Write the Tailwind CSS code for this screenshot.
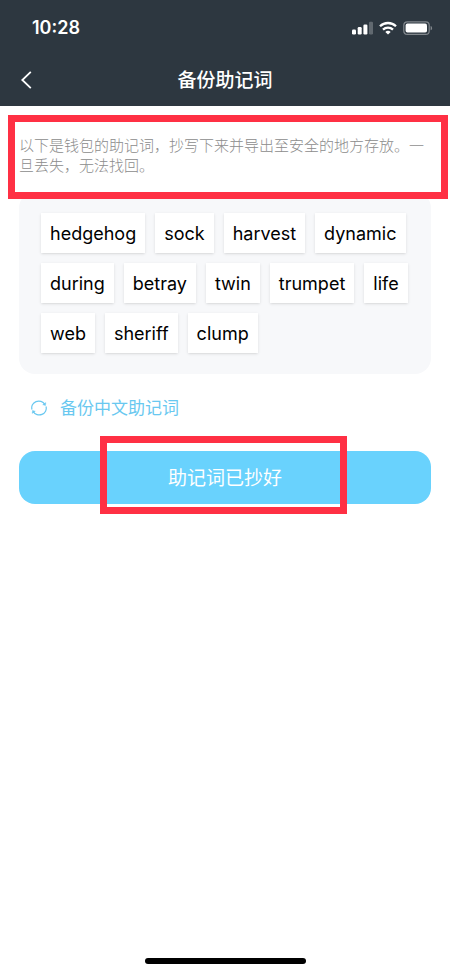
<!DOCTYPE html>
<html lang="zh-CN">
<head>
<meta charset="utf-8">
<meta name="viewport" content="width=device-width, initial-scale=1">
<title>备份助记词</title>
<script src="https://cdn.jsdelivr.net/npm/@tailwindcss/browser@4"></script>
</head>
<body class="flex min-h-screen flex-col bg-white font-[Inter,'Noto_Sans_CJK_SC',sans-serif] text-black">
  <header class="bg-[#2d3740] text-white">
    <div class="flex h-[54px] items-center justify-between pl-8 pr-[17px] pt-[2px]">
      <span class="text-[18px] font-semibold leading-6">10:28</span>
      <div class="flex items-center gap-[6px]">
        <svg class="h-[14px] w-[21px]" viewBox="0 0 21 14" fill="currentColor" role="img" aria-label="信号">
          <rect x="0" y="8.5" width="4" height="5" rx="1.2"/>
          <rect x="5.7" y="6" width="4" height="7.5" rx="1.2"/>
          <rect x="11.4" y="3.5" width="4" height="10" rx="1.2"/>
          <rect x="17" y="0.8" width="4" height="12.7" rx="1.2" opacity=".25"/>
        </svg>
        <svg class="h-[14px] w-[18px]" viewBox="0 0 18 14" fill="none" stroke="currentColor" stroke-width="2.3" role="img" aria-label="无线网络">
          <path d="M1 5.2C5.4.9 12.6.9 17 5.2"/>
          <path d="M4 8.6c2.8-2.6 7.2-2.600 10 0"/>
          <path d="M9 13.600 6.300 10.900c1.500-1.400 3.900-1.400 5.400 0z" fill="currentColor" stroke="none"/>
        </svg>
        <svg class="h-[14px] w-[30px]" viewBox="0 0 30 14" role="img" aria-label="电量">
          <rect x=".8" y=".8" width="25.400" height="12.600" rx="3.500" fill="none" stroke="#fff" stroke-opacity=".4" stroke-width="1.200"/>
          <rect x="2.600" y="2.600" width="21.400" height="9" rx="1.800" fill="#fff"/>
          <path d="M27.600 4.900c2 .6 2 3.800 0 4.400z" fill="#fff" fill-opacity=".4"/>
        </svg>
      </div>
    </div>
    <div class="grid h-[52px] grid-cols-[64px_1fr_64px] items-center">
      <button type="button" aria-label="返回" class="flex h-full items-center pl-5">
        <svg class="h-5 w-3" viewBox="0 0 12 20" fill="none" stroke="currentColor" stroke-width="1.800"><path d="M10.800 1.800 2.300 10l8.500 8.200"/></svg>
      </button>
      <h1 class="pt-[2px] text-center text-[19px] font-medium leading-6">备份助记词</h1>
    </div>
  </header>

  <main class="flex grow flex-col px-[19px]">
    <section class="relative flex h-[86px] flex-col pt-[30px]">
      <p class="text-[15px] font-light leading-5 text-[#8c8c8c]">以下是钱包的助记词，抄写下来并导出至安全的地方存放。一旦丢失，无法找回。</p>
      <div class="pointer-events-none absolute -left-[11px] -right-[17px] top-[9px] z-10 h-[84px] border-[7px] border-[#ff3044]"></div>
    </section>

    <ul class="flex flex-wrap gap-[10px] rounded-2xl bg-[#f7f8fa] py-[21px] pl-[22px] pr-4 text-[18px] leading-6">
      <li class="bg-white px-[9px] pb-[7px] pt-[9px] shadow-sm">hedgehog</li>
      <li class="bg-white px-[9px] pb-[7px] pt-[9px] shadow-sm">sock</li>
      <li class="bg-white px-[9px] pb-[7px] pt-[9px] shadow-sm">harvest</li>
      <li class="bg-white px-[9px] pb-[7px] pt-[9px] shadow-sm">dynamic</li>
      <li class="bg-white px-[9px] pb-[7px] pt-[9px] shadow-sm">during</li>
      <li class="bg-white px-[9px] pb-[7px] pt-[9px] shadow-sm">betray</li>
      <li class="bg-white px-[9px] pb-[7px] pt-[9px] shadow-sm">twin</li>
      <li class="bg-white px-[9px] pb-[7px] pt-[9px] shadow-sm">trumpet</li>
      <li class="bg-white px-[9px] pb-[7px] pt-[9px] shadow-sm">life</li>
      <li class="bg-white px-[9px] pb-[7px] pt-[9px] shadow-sm">web</li>
      <li class="bg-white px-[9px] pb-[7px] pt-[9px] shadow-sm">sheriff</li>
      <li class="bg-white px-[9px] pb-[7px] pt-[9px] shadow-sm">clump</li>
    </ul>

    <button type="button" class="mt-[22px] flex items-center gap-[13px] self-start pl-3 text-[17px] leading-6 text-[#69c8f0]">
      <svg class="h-4 w-4" viewBox="0 0 16 16" fill="none" stroke="currentColor" stroke-width="1.200">
        <path d="M1 9.500A7 6.600 0 0 1 13.800 4.400M15 6.500A7 6.600 0 0 1 2.200 11.600"/>
        <path d="m14.800 2.600-.3 3-2.800-.9zM1.200 13.400l.3-3 2.800.9z" fill="currentColor" stroke-width=".4"/>
      </svg>
      备份中文助记词
    </button>

    <div class="relative mt-[31px]">
      <button type="button" class="flex h-[53px] w-full items-center justify-center rounded-2xl bg-[#69d2fd] pt-[2px] text-[19px] leading-6 text-white">助记词已抄好</button>
      <div class="pointer-events-none absolute -bottom-[10px] -top-[15px] left-[81px] right-[84px] border-[7px] border-[#ff3044]"></div>
    </div>
  </main>

  <footer class="flex justify-center pb-[10px]">
    <div class="h-[6px] w-[161px] rounded-full bg-black"></div>
  </footer>
</body>
</html>
